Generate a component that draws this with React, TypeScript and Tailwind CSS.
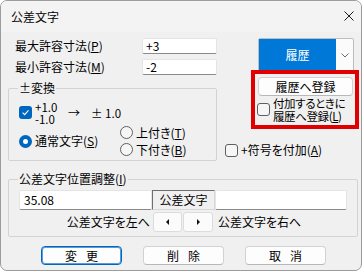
import React from "react";

function Checkbox({ checked }: { checked?: boolean }) {
  return checked ? (
    <span className="flex h-[13px] w-[13px] shrink-0 items-center justify-center rounded-[3px] bg-[#0067c0]">
      <svg width="9" height="9" viewBox="0 0 9 9">
        <path d="M1.6 4.7 L3.6 6.6 L7.5 2.3" fill="none" stroke="white" strokeWidth="1.1" />
      </svg>
    </span>
  ) : (
    <span className="h-[13px] w-[13px] shrink-0 rounded-[3px] border border-[#5f5f5f] bg-[#f6f6f6]" />
  );
}

function Radio({ checked }: { checked?: boolean }) {
  return checked ? (
    <span className="flex h-[13px] w-[13px] shrink-0 items-center justify-center rounded-full bg-[#0067c0]">
      <span className="h-[5px] w-[5px] rounded-full bg-white" />
    </span>
  ) : (
    <span className="h-[13px] w-[13px] shrink-0 rounded-full border border-[#5f5f5f] bg-[#f6f6f6]" />
  );
}

function U({ c }: { c: string }) {
  return <span className="underline underline-offset-[1px]">{c}</span>;
}

function Btn({ a, b, focus }: { a: string; b: string; focus?: boolean }) {
  return (
    <div
      className={
        "flex h-[19px] w-[81px] items-center justify-center gap-[9px] rounded-[4px] bg-[#fdfdfd] leading-[14px] " +
        (focus
          ? "border border-[#0067c0] shadow-[inset_0_0_0_1px_#5d9bd8]"
          : "border border-[#d2d2d2] border-b-[#b8b8b8]")
      }
    >
      <span>{a}</span>
      <span>{b}</span>
    </div>
  );
}

export default function App() {
  return (
    <div className="h-[272px] w-[364px] bg-white text-[12px] text-black font-['Noto_Sans_CJK_JP','Noto_Sans',sans-serif] [font-feature-settings:'palt']">
      <div className="flex h-[271px] w-[362px] flex-col overflow-hidden rounded-[7px] border border-[#9c9c9c] bg-[#f0f0f0]">
        {/* title bar */}
        <div className="flex h-[31px] shrink-0 items-center justify-between bg-[#f3f3f3] pl-[10px] pr-[7px]">
          <span className="leading-[14px]">公差文字</span>
          <svg width="10" height="10" viewBox="0 0 10 10" className="mb-[2px]">
            <path d="M0.5 0.5 L9.5 9.5 M9.5 0.5 L0.5 9.5" stroke="#1a1a1a" strokeWidth="1" />
          </svg>
        </div>

        {/* top area */}
        <div className="flex">
          {/* left column */}
          <div className="ml-[7px] flex w-[209px] flex-col pt-[6px]">
            <div className="flex h-[16px] items-center">
              <span className="w-[134px] pl-[7px] leading-[14px]">
                最大許容寸法(<U c="P" />)
              </span>
              <div className="flex h-[16px] w-[75px] items-center rounded-[2px] border border-[#e4e4e4] border-b-[#8a8a8a] bg-white pl-[3px] leading-[14px]">
                +3
              </div>
            </div>
            <div className="mt-[5px] flex h-[16px] items-center">
              <span className="w-[134px] pl-[7px] leading-[14px]">
                最小許容寸法(<U c="M" />)
              </span>
              <div className="flex h-[16px] w-[75px] items-center rounded-[2px] border border-[#e4e4e4] border-b-[#8a8a8a] bg-white pl-[3px] leading-[14px]">
                -2
              </div>
            </div>

            {/* ± group */}
            <div className="relative mt-[13px] h-[73px] w-[209px] rounded-[2px] border border-[#d3d3d3]">
              <span className="absolute -top-[8px] left-[9px] bg-[#f0f0f0] px-[1px] leading-[14px]">±変換</span>
              <div className="mt-[12px] flex h-[23px] items-center pl-[10px]">
                <Checkbox checked />
                <div className="ml-[3px] flex w-[33px] flex-col text-[11.5px] leading-[12px]">
                  <span>+1.0</span>
                  <span>-1.0</span>
                </div>
                <span className="w-[23px] text-[12px] leading-[14px]">→</span>
                <span className="text-[11.5px] leading-[14px]">±&nbsp;1.0</span>
              </div>
              <div className="flex h-[34px] items-center pl-[10px]">
                <div className="flex w-[101px] items-center">
                  <Radio checked />
                  <span className="ml-[3px] leading-[14px]">
                    通常文字(<U c="S" />)
                  </span>
                </div>
                <div className="flex flex-col">
                  <div className="flex h-[17px] items-center">
                    <Radio />
                    <span className="ml-[3px] leading-[14px]">
                      上付き(<U c="T" />)
                    </span>
                  </div>
                  <div className="flex h-[17px] items-center">
                    <Radio />
                    <span className="ml-[3px] leading-[14px]">
                      下付き(<U c="B" />)
                    </span>
                  </div>
                </div>
              </div>
            </div>
          </div>

          {/* right column */}
          <div className="ml-[8px] flex w-[136px] flex-col pt-[6px]">
            <div className="ml-[33px] flex h-[34px] w-[96px] rounded-[2px] border border-[#bdbdbd] bg-[#fbfbfb]">
              <div className="flex w-[77px] items-center justify-center bg-[#0078d7] leading-[14px] text-white">履歴</div>
              <div className="flex flex-1 items-center justify-center">
                <svg width="8" height="5" viewBox="0 0 8 5">
                  <path d="M0.5 0.5 L4 4 L7.5 0.5" fill="none" stroke="#6a6a6a" strokeWidth="1" />
                </svg>
              </div>
            </div>
            <div className="-mt-[2px] ml-[26px] flex h-[59px] w-[108px] flex-col border-4 border-[#e00000]">
              <div className="ml-[3px] mt-[3px] flex h-[19px] w-[95px] items-center justify-center rounded-[4px] border border-[#d2d2d2] border-b-[#b8b8b8] bg-[#fdfdfd] leading-[14px]">
                履歴へ登録
              </div>
              <div className="ml-[2px] mt-[1px] flex items-center">
                <Checkbox />
                <div className="ml-[3px] flex flex-col text-[11.5px] leading-[12.5px] tracking-[-0.4px]">
                  <span>付加するときに</span>
                  <span>
                    履歴へ登録(<U c="L" />)
                  </span>
                </div>
              </div>
            </div>
            <div className="mt-[14px] flex h-[14px] items-center">
              <Checkbox />
              <span className="ml-[3px] leading-[14px]">
                +符号を付加(<U c="A" />)
              </span>
            </div>
          </div>
        </div>

        {/* position group */}
        <div className="relative ml-[7px] mt-[18px] h-[58px] w-[350px] rounded-[2px] border border-[#d3d3d3]">
          <span className="absolute -top-[8px] left-[9px] bg-[#f0f0f0] px-[1px] leading-[14px]">
            公差文字位置調整(<U c="I" />)
          </span>
          <div className="mt-[10px] grid grid-cols-[133px_63px_132px] pl-[10px]">
            <div className="flex h-[20px] items-center rounded-[2px] border border-[#e4e4e4] border-b-[#8a8a8a] bg-white pl-[4px] leading-[14px]">
              35.08
            </div>
            <div className="flex h-[20px] items-center justify-center border border-[#d8d8d8] border-l-[#6f6f6f] border-t-[#6f6f6f] bg-[#f0f0f0] leading-[14px]">
              公差文字
            </div>
            <div className="h-[20px] rounded-[2px] border border-[#e4e4e4] border-b-[#8a8a8a] bg-white" />
            <div className="mt-[2px] flex h-[20px] items-center justify-end pr-[2px] leading-[14px]">公差文字を左へ</div>
            <div className="mt-[2px] flex h-[20px] gap-[1px] pl-[1px]">
              <div className="flex w-[29px] items-center justify-center rounded-[3px] border border-[#dcdcdc] bg-[#fbfbfb]">
                <svg width="3" height="6" viewBox="0 0 3 6">
                  <path d="M3 0 L0 3 L3 6 Z" fill="#111" />
                </svg>
              </div>
              <div className="flex w-[30px] items-center justify-center rounded-[3px] border border-[#dcdcdc] bg-[#fbfbfb]">
                <svg width="3" height="6" viewBox="0 0 3 6">
                  <path d="M0 0 L3 3 L0 6 Z" fill="#111" />
                </svg>
              </div>
            </div>
            <div className="mt-[2px] flex h-[20px] items-center pl-[3px] leading-[14px]">公差文字を右へ</div>
          </div>
        </div>

        {/* buttons */}
        <div className="mt-[9px] flex gap-[21px] pl-[40px]">
          <Btn a="変" b="更" focus />
          <Btn a="削" b="除" />
          <Btn a="取" b="消" />
        </div>
      </div>
    </div>
  );
}
